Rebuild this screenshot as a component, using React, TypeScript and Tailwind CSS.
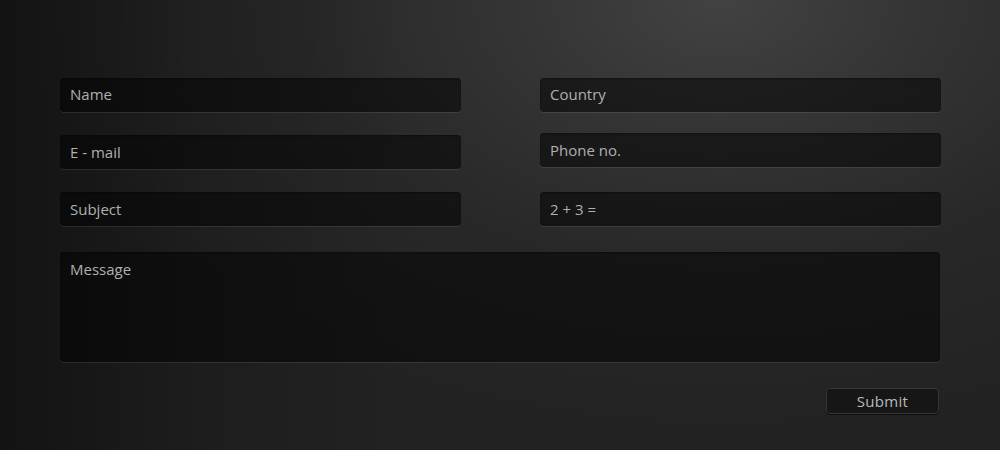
import { useState } from "react";

const fieldClass =
    "w-full h-[34px] rounded-[4px] bg-black/50 px-[10px] text-[15px] text-[#b4b4b4] placeholder:text-[#b0b0b0] outline-none shadow-[0_1px_0_rgba(255,255,255,0.09),inset_0_1px_2px_rgba(0,0,0,0.35)]";

function Field({ placeholder, className = "" }: { placeholder: string; className?: string }) {
    const [value, setValue] = useState("");
    return (
        <input
            type="text"
            value={value}
            placeholder={placeholder}
            onChange={e => setValue(e.target.value)}
            className={`${fieldClass} ${className}`}
        />
    );
}

export default function App() {
    const [message, setMessage] = useState("");

    return (
        <div
            className="w-[1000px] h-[450px] overflow-hidden bg-[linear-gradient(to_right,rgba(0,0,0,0.45)_0%,rgba(0,0,0,0.15)_20%,rgba(0,0,0,0)_40%),radial-gradient(ellipse_70%_100%_at_72%_0%,#424242_0%,#343434_30%,#282828_60%,#222222_100%)] pt-[78px] pl-[60px]"
            style={{ fontFamily: '"Open Sans", "Noto Sans", sans-serif' }}
        >
            <div className="w-[881px]">
                <div className="flex gap-[79px]">
                    <div className="flex flex-col gap-[23px] w-[401px]">
                        <Field placeholder="Name" className="pb-[2px]" />
                        <Field placeholder="E - mail" />
                        <Field placeholder="Subject" />
                    </div>
                    <div className="flex flex-col w-[401px]">
                        <Field placeholder="Country" className="pb-[2px]" />
                        <Field placeholder="Phone no." className="mt-[21px]" />
                        <Field placeholder="2 + 3 =" className="mt-[25px]" />
                    </div>
                </div>
                <textarea
                    value={message}
                    placeholder="Message"
                    onChange={e => setMessage(e.target.value)}
                    className="mt-[26px] block w-[880px] h-[110px] resize-none rounded-[4px] bg-black/50 px-[10px] pt-[6px] text-[15px] text-[#b4b4b4] placeholder:text-[#b0b0b0] outline-none shadow-[0_1px_0_rgba(255,255,255,0.09),inset_0_1px_2px_rgba(0,0,0,0.35)]"
                />
                <div className="flex justify-end pr-[2px] mt-[26px]">
                    <button className="w-[113px] h-[26px] rounded-[4px] border border-[#363636] bg-[#161616] text-[15px] leading-none text-[#bababa] tracking-[0.3px] shadow-[0_1px_1px_rgba(0,0,0,0.6)]">
                        Submit
                    </button>
                </div>
            </div>
        </div>
    );
}
